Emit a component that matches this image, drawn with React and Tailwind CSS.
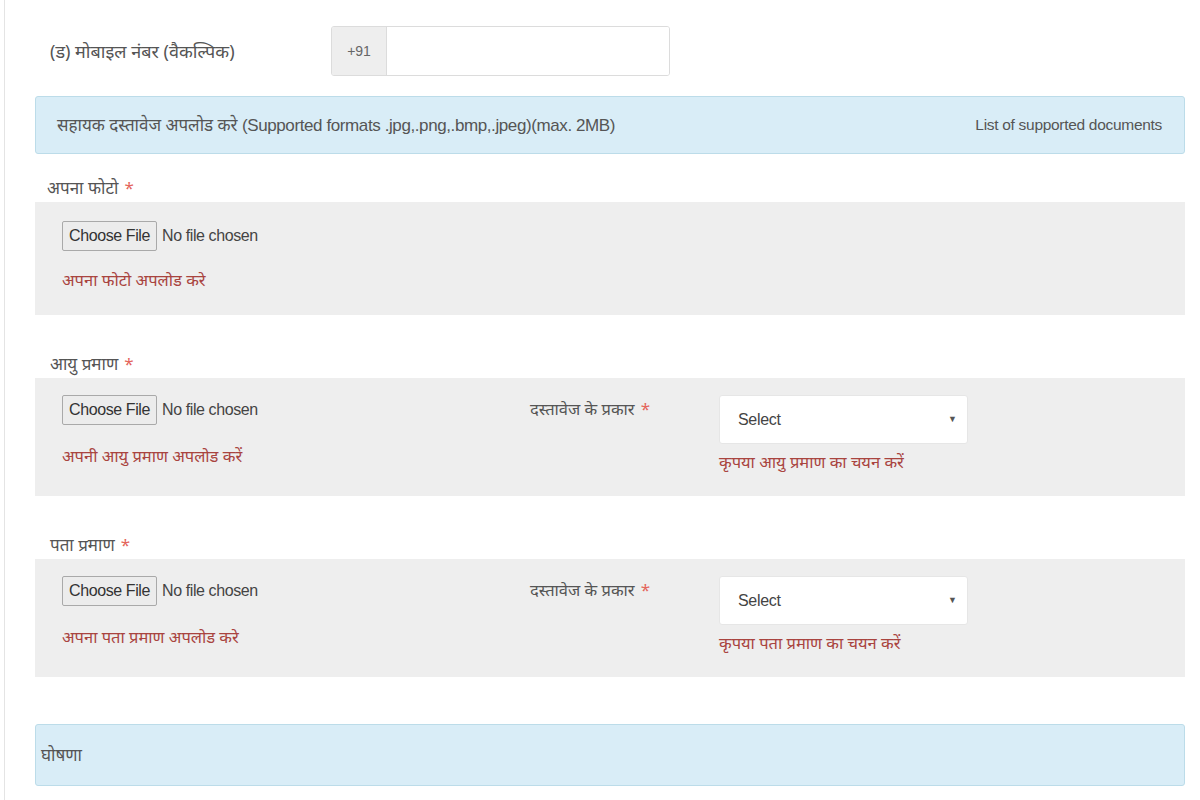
import React from "react";

const hindi = { fontFamily: '"Noto Sans", "Liberation Sans", sans-serif' };

const Req = () => <span className="text-[#e4655c] ml-[6px] text-[17px]">*</span>;

const FileInput = () => (
  <div className="flex items-center gap-[5px]">
    <button className="h-[30px] w-[95px] border border-[#a9a9a9] rounded-[2px] bg-[#ececec] text-[16px] text-[#333] tracking-[-0.4px]">
      Choose File
    </button>
    <span className="text-[16px] text-[#444] tracking-[-0.4px]">No file chosen</span>
  </div>
);

const FakeSelect = () => (
  <div className="flex items-center justify-between w-[249px] h-[49px] bg-white rounded-[3px] border border-[#e6e6e6] pl-[18px] pr-[10px]">
    <span className="text-[16px] text-[#444] tracking-[-0.3px]">Select</span>
    <span className="text-[9px] text-[#555]">▼</span>
  </div>
);

const DocPanel = ({ title, hint, pick }) => (
  <>
    <div className="h-[63px] flex items-end pb-[2px] pl-[15px] text-[17px] text-[#555]" style={hindi}>
      {title}
      <Req />
    </div>
    <div className="flex bg-[#eeeeee] h-[118px] pl-[27px] pt-[17px]">
      <div className="w-[468px] flex flex-col gap-[19px]">
        <FileInput />
        <div className="text-[16.5px] text-[#a9443f]" style={hindi}>{hint}</div>
      </div>
      <div className="w-[189px] pt-[1px] text-[16.5px] text-[#555]" style={hindi}>
        दस्तावेज के प्रकार
        <Req />
      </div>
      <div className="flex flex-col gap-[6px]">
        <FakeSelect />
        <div className="text-[16.5px] text-[#a9443f]" style={hindi}>{pick}</div>
      </div>
    </div>
  </>
);

export default function App() {
  return (
    <div className="min-h-[800px] bg-white" style={{ fontFamily: '"Liberation Sans", sans-serif' }}>
      <div className="ml-[4px] border-l border-[#e4e4e4] min-h-[800px] pl-[30px] pr-[15px] pt-[26px]">
        {/* mobile */}
        <div className="flex items-center">
          <div className="w-[296px] pl-[15px] text-[18px] text-[#555]" style={hindi}>
            (ड) मोबाइल नंबर (वैकल्पिक)
          </div>
          <div className="flex h-[50px] w-[339px] border border-[#dcdcdc] rounded-[3px] overflow-hidden">
            <div className="w-[55px] bg-[#eeeeee] border-r border-[#dcdcdc] flex items-center justify-center text-[14px] text-[#666]">
              +91
            </div>
            <div className="flex-1 bg-white" />
          </div>
        </div>

        {/* info bar */}
        <div className="mt-[20px] h-[58px] bg-[#d9edf7] border border-[#bcdce9] rounded-[3px] flex items-center justify-between pl-[21px] pr-[22px] text-[#555]">
          <span className="text-[17px]" style={hindi}>
            सहायक दस्तावेज अपलोड करे{" "}
            <span className="text-[17px] tracking-[-0.4px]" style={{ fontFamily: '"Liberation Sans", sans-serif' }}>
              (Supported formats .jpg,.png,.bmp,.jpeg)(max. 2MB)
            </span>
          </span>
          <span className="text-[15.5px] tracking-[-0.3px]">List of supported documents</span>
        </div>

        {/* photo */}
        <div className="h-[48px] flex items-end pb-[2px] pl-[12px] text-[17px] text-[#555]" style={hindi}>
          अपना फोटो
          <Req />
        </div>
        <div className="bg-[#eeeeee] h-[113px] pl-[27px] pt-[19px] flex flex-col gap-[17px]">
          <FileInput />
          <div className="text-[16.5px] text-[#a9443f]" style={hindi}>अपना फोटो अपलोड करे</div>
        </div>

        <DocPanel title="आयु प्रमाण" hint="अपनी आयु प्रमाण अपलोड करें" pick="कृपया आयु प्रमाण का चयन करें" />
        <DocPanel title="पता प्रमाण" hint="अपना पता प्रमाण अपलोड करे" pick="कृपया पता प्रमाण का चयन करें" />

        {/* declaration */}
        <div className="mt-[47px] h-[62px] bg-[#d9edf7] border border-[#bcdce9] rounded-[3px] flex items-center pl-[5px] text-[17px] text-[#555]" style={hindi}>
          घोषणा
        </div>
      </div>
    </div>
  );
}
